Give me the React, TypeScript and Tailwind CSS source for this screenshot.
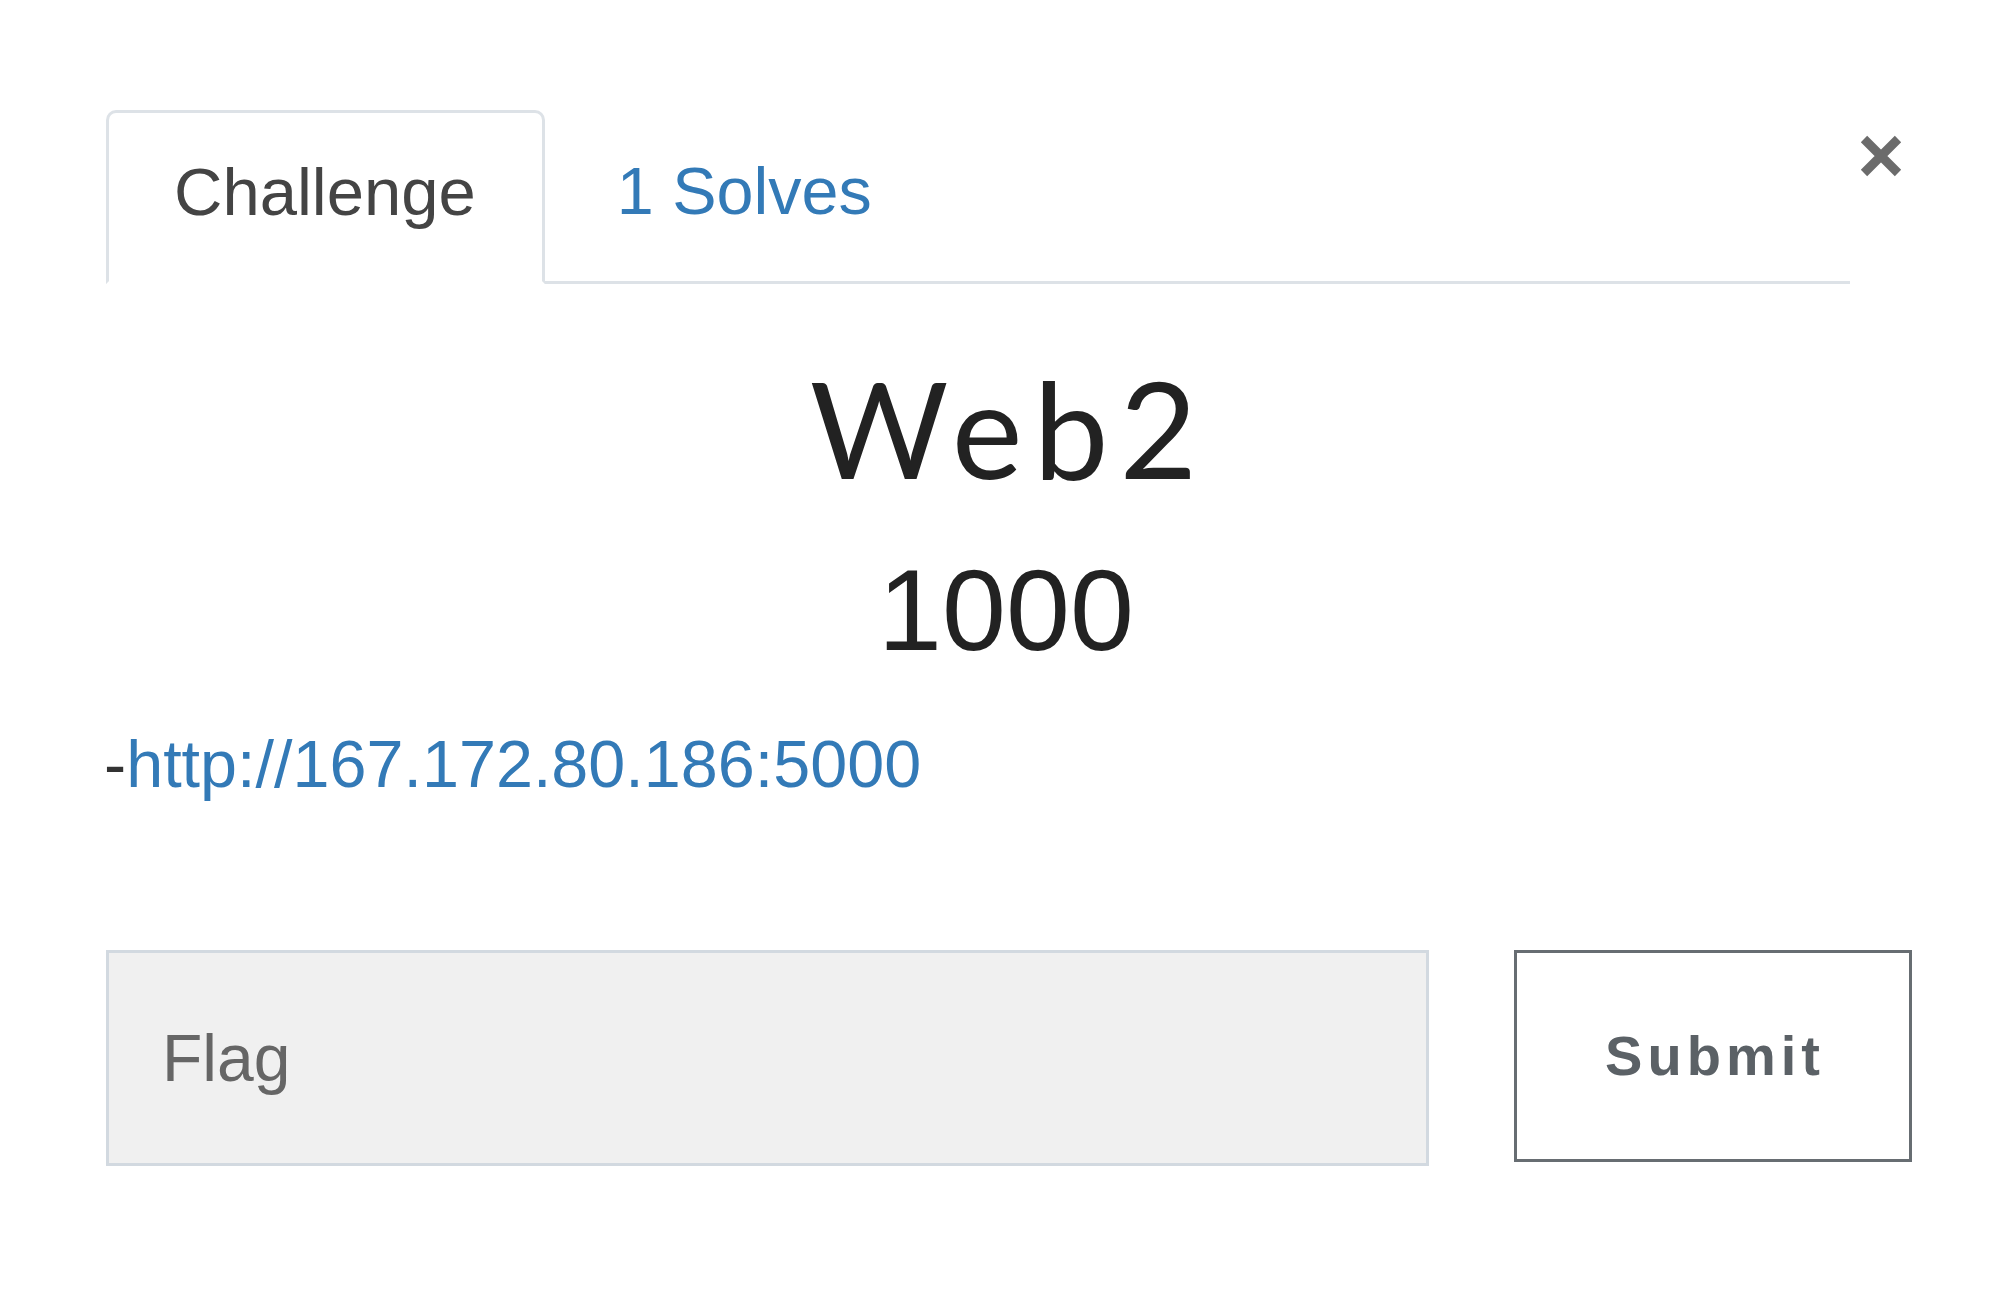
import { useState } from 'react';

function CloseIcon() {
  return (
    <svg width="46" height="46" viewBox="0 0 46 46" className="block">
      <path d="M6 6 L40 40 M40 6 L6 40" stroke="#6b6b6b" strokeWidth="9" strokeLinecap="butt" />
    </svg>
  );
}

export default function App() {
  const [tab, setTab] = useState<'challenge' | 'solves'>('challenge');
  const [flag, setFlag] = useState('');

  return (
    <div className="min-h-[1296px] w-[2000px] bg-white font-['Liberation_Sans',Arial,sans-serif]">
      <div className="ml-[106px] w-[1806px] pt-[110px]">
        {/* Tabs + close */}
        <div className="flex items-start">
          <div className="flex w-[1744px] border-b-[3px] border-[#dde2e7]">
            <button
              onClick={() => setTab('challenge')}
              className={`-mb-[3px] flex h-[174px] items-center rounded-t-[10px] border-[3px] pb-[12px] pl-[65px] pr-[66px] text-[67px] leading-none ${
                tab === 'challenge' ? 'border-[#dde2e7] border-b-white text-[#444]' : 'border-transparent text-[#337ab7]'
              }`}
            >
              Challenge
            </button>
            <button
              onClick={() => setTab('solves')}
              className={`-mb-[3px] flex h-[174px] items-center rounded-t-[10px] border-[3px] pb-[12px] pl-[69px] pr-[69px] text-[66.5px] leading-none ${
                tab === 'solves' ? 'border-[#dde2e7] border-b-white text-[#444]' : 'border-transparent text-[#337ab7]'
              }`}
            >
              1 Solves
            </button>
          </div>
          <button className="mt-[23px] flex flex-1 justify-center">
            <CloseIcon />
          </button>
        </div>

        {/* Challenge body */}
        <div className="text-center">
          <h2 className="mt-[77px] font-['Lato',sans-serif] text-[134px] leading-none text-[#222] tracking-[11px]">
            Web2
          </h2>
          <h3 className="mt-[58px] pr-[6px] text-[115px] leading-none text-[#222]">1000</h3>
        </div>

        <p className="-ml-[2px] mt-[63px] text-[66.5px] leading-none text-[#333]">
          -<a href="#" className="text-[#337ab7]">http://167.172.80.186:5000</a>
        </p>

        {/* Flag form */}
        <div className="mt-[152px] flex items-start">
          <input
            value={flag}
            onChange={(e) => setFlag(e.target.value)}
            placeholder="Flag"
            className="h-[216px] w-[1323px] border-[3px] border-[#d2d9e0] bg-[#f0f0f0] pl-[53px] text-[66px] text-[#555] outline-none placeholder:text-[#666]"
          />
          <button className="ml-[85px] h-[212px] flex-1 border-[3px] border-[#676d72] bg-white pl-[4px] text-[56px] font-bold tracking-[5px] text-[#5b6166]">
            Submit
          </button>
        </div>
      </div>
    </div>
  );
}
